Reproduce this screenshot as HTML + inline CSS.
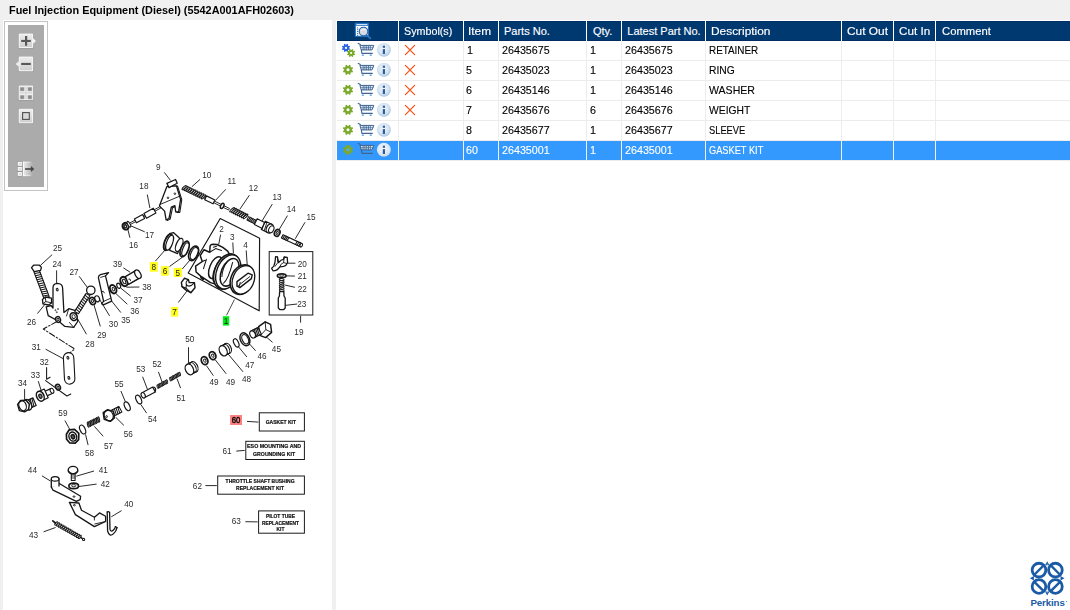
<!DOCTYPE html><html><head><meta charset="utf-8"><title>Parts</title><style>
html,body{margin:0;padding:0}
body{width:1070px;height:610px;overflow:hidden;background:#f0f0f0;font-family:"Liberation Sans", sans-serif;font-size:11px;color:#000;position:relative}
.abs{position:absolute}
#title{left:9.2px;top:3px;font-weight:bold;font-size:11px;line-height:14px;white-space:nowrap;transform-origin:0 50%;transform:scaleX(0.9897);color:#000}
#left{left:3px;top:20px;width:329px;height:590px;background:#fff}
#right{left:336px;top:20px;width:734px;height:590px;background:#fff}
#hdr{left:337px;top:21px;width:733px;height:20px;background:#003870;box-shadow:inset 0 -1px 0 #002c62, inset 0 1px 0 #003066}
.hs{position:absolute;top:21px;width:1px;height:20px;background:#fff}
.ht{position:absolute;transform-origin:0 50%;-webkit-text-stroke:0.15px #fff;top:21px;height:20px;line-height:20px;color:#fff;white-space:nowrap;font-size:11px}
.vl{position:absolute;top:41px;width:1px;height:120px;background:#ededed}
.hl{position:absolute;left:337px;width:733px;height:1px;background:#ececec}
.ct{position:absolute;transform-origin:0 50%;-webkit-text-stroke:0.12px currentColor;height:19px;line-height:19px;white-space:nowrap;font-size:11px}
#sel{left:337px;top:141px;width:733px;height:19px;background:#3399ff}
.selsep{position:absolute;top:141px;width:1px;height:19px;background:#f0f0f0}
svg{position:absolute;left:0;top:0;overflow:visible}
svg .lb{filter:grayscale(1)}
</style></head><body>
<div id="title" class="abs">Fuel Injection Equipment (Diesel) (5542A001AFH02603)</div>
<div id="left" class="abs"></div><div id="right" class="abs"></div>
<div id="hdr" class="abs"></div>
<div class="hs" style="left:398px"></div>
<div class="hs" style="left:463px"></div>
<div class="hs" style="left:498px"></div>
<div class="hs" style="left:586px"></div>
<div class="hs" style="left:621px"></div>
<div class="hs" style="left:705px"></div>
<div class="hs" style="left:841px"></div>
<div class="hs" style="left:893px"></div>
<div class="hs" style="left:935px"></div>
<div class="ht" id="h1" style="left:404.3px;transform:scaleX(0.9756)">Symbol(s)</div>
<div class="ht" id="h2" style="left:468.1px;transform:scaleX(1.0765)">Item</div>
<div class="ht" id="h3" style="left:504px;transform:scaleX(1.0000)">Parts No.</div>
<div class="ht" id="h4" style="left:592.9px;transform:scaleX(1.0000)">Qty.</div>
<div class="ht" id="h5" style="left:627.3px;transform:scaleX(1.0000)">Latest Part No.</div>
<div class="ht" id="h6" style="left:711.3px;transform:scaleX(1.0801)">Description</div>
<div class="ht" id="h7" style="left:847.3px;transform:scaleX(1.0827)">Cut Out</div>
<div class="ht" id="h8" style="left:899.4px;transform:scaleX(1.0611)">Cut In</div>
<div class="ht" id="h9" style="left:941.5px;transform:scaleX(1.0230)">Comment</div>
<div class="vl" style="left:398px"></div>
<div class="vl" style="left:463px"></div>
<div class="vl" style="left:498px"></div>
<div class="vl" style="left:586px"></div>
<div class="vl" style="left:621px"></div>
<div class="vl" style="left:705px"></div>
<div class="vl" style="left:841px"></div>
<div class="vl" style="left:893px"></div>
<div class="vl" style="left:935px"></div>
<div class="hl" style="top:60px"></div>
<div class="hl" style="top:80px"></div>
<div class="hl" style="top:100px"></div>
<div class="hl" style="top:120px"></div>
<div class="hl" style="top:140px"></div>
<div class="hl" style="top:160px"></div>
<div id="sel" class="abs"></div>
<div class="selsep" style="left:398px"></div>
<div class="selsep" style="left:463px"></div>
<div class="selsep" style="left:498px"></div>
<div class="selsep" style="left:586px"></div>
<div class="selsep" style="left:621px"></div>
<div class="selsep" style="left:705px"></div>
<div class="selsep" style="left:841px"></div>
<div class="selsep" style="left:893px"></div>
<div class="selsep" style="left:935px"></div>
<div class="ct" id="c2_0" style="left:466.9px;top:41px;color:#000;transform:scaleX(0.9750)">1</div>
<div class="ct" id="c3_0" style="left:501.9px;top:41px;color:#000;transform:scaleX(0.9750)">26435675</div>
<div class="ct" id="c4_0" style="left:589.9px;top:41px;color:#000;transform:scaleX(0.9750)">1</div>
<div class="ct" id="c5_0" style="left:624.9px;top:41px;color:#000;transform:scaleX(0.9750)">26435675</div>
<div class="ct" id="c6_0" style="left:708.8px;top:41px;color:#000;transform:scaleX(0.8983)">RETAINER</div>
<div class="ct" id="c2_1" style="left:466.3px;top:61px;color:#000;transform:scaleX(0.9750)">5</div>
<div class="ct" id="c3_1" style="left:501.9px;top:61px;color:#000;transform:scaleX(0.9750)">26435023</div>
<div class="ct" id="c4_1" style="left:589.9px;top:61px;color:#000;transform:scaleX(0.9750)">1</div>
<div class="ct" id="c5_1" style="left:624.9px;top:61px;color:#000;transform:scaleX(0.9750)">26435023</div>
<div class="ct" id="c6_1" style="left:709.0px;top:61px;color:#000;transform:scaleX(0.9350)">RING</div>
<div class="ct" id="c2_2" style="left:466.3px;top:81px;color:#000;transform:scaleX(0.9750)">6</div>
<div class="ct" id="c3_2" style="left:501.9px;top:81px;color:#000;transform:scaleX(0.9750)">26435146</div>
<div class="ct" id="c4_2" style="left:589.9px;top:81px;color:#000;transform:scaleX(0.9750)">1</div>
<div class="ct" id="c5_2" style="left:624.9px;top:81px;color:#000;transform:scaleX(0.9750)">26435146</div>
<div class="ct" id="c6_2" style="left:709.2px;top:81px;color:#000;transform:scaleX(0.9598)">WASHER</div>
<div class="ct" id="c2_3" style="left:466.3px;top:101px;color:#000;transform:scaleX(0.9750)">7</div>
<div class="ct" id="c3_3" style="left:501.9px;top:101px;color:#000;transform:scaleX(0.9750)">26435676</div>
<div class="ct" id="c4_3" style="left:589.9px;top:101px;color:#000;transform:scaleX(0.9750)">6</div>
<div class="ct" id="c5_3" style="left:624.9px;top:101px;color:#000;transform:scaleX(0.9750)">26435676</div>
<div class="ct" id="c6_3" style="left:709.2px;top:101px;color:#000;transform:scaleX(0.9386)">WEIGHT</div>
<div class="ct" id="c2_4" style="left:466.2px;top:121px;color:#000;transform:scaleX(0.9750)">8</div>
<div class="ct" id="c3_4" style="left:501.9px;top:121px;color:#000;transform:scaleX(0.9750)">26435677</div>
<div class="ct" id="c4_4" style="left:589.9px;top:121px;color:#000;transform:scaleX(0.9750)">1</div>
<div class="ct" id="c5_4" style="left:624.9px;top:121px;color:#000;transform:scaleX(0.9750)">26435677</div>
<div class="ct" id="c6_4" style="left:708.8px;top:121px;color:#000;transform:scaleX(0.8464)">SLEEVE</div>
<div class="ct" id="c2_5" style="left:466.3px;top:141px;color:#fff;transform:scaleX(0.9750)">60</div>
<div class="ct" id="c3_5" style="left:501.9px;top:141px;color:#fff;transform:scaleX(0.9750)">26435001</div>
<div class="ct" id="c4_5" style="left:589.9px;top:141px;color:#fff;transform:scaleX(0.9750)">1</div>
<div class="ct" id="c5_5" style="left:624.9px;top:141px;color:#fff;transform:scaleX(0.9750)">26435001</div>
<div class="ct" id="c6_5" style="left:709.3px;top:141px;color:#fff;transform:scaleX(0.8402)">GASKET KIT</div>
<svg width="1070" height="610" viewBox="0 0 1070 610">
<g><rect x="355.3" y="23.2" width="13.1" height="13.1" fill="#fff" stroke="#1b6dbf" stroke-width="1"/><rect x="355.3" y="23.2" width="13.1" height="2.6" fill="#1b6dbf"/><rect x="356.4" y="24.1" width="11" height="0.8" fill="#fff"/><rect x="357" y="27.5" width="1.2" height="0.9" fill="#1b5ea8"/><rect x="357" y="29.3" width="1.2" height="0.9" fill="#1b5ea8"/><rect x="357" y="31.1" width="1.2" height="0.9" fill="#1b5ea8"/><rect x="357" y="32.9" width="1.2" height="0.9" fill="#1b5ea8"/><rect x="357" y="34.7" width="1.2" height="0.9" fill="#1b5ea8"/><path d="M366,34.6 L370.3,38.2" stroke="#2a72c4" stroke-width="1.8" stroke-linecap="round"/><circle cx="363.5" cy="31.5" r="4.3" fill="#d9dadf" stroke="#1c63b3" stroke-width="1.1"/><path d="M360.9,30.3 Q363.4,28.3 366,30.3" stroke="#fff" stroke-width="0.9" fill="none" opacity="0.9"/></g>
<path d="M349.08,48.28 L350.10,48.81 L349.55,50.14 L348.45,49.79 L347.91,50.34 L348.26,51.44 L346.93,52.00 L346.40,50.97 L345.62,50.98 L345.09,52.00 L343.76,51.45 L344.11,50.35 L343.56,49.81 L342.46,50.16 L341.90,48.83 L342.93,48.30 L342.92,47.52 L341.90,46.99 L342.45,45.66 L343.55,46.01 L344.09,45.46 L343.74,44.36 L345.07,43.80 L345.60,44.83 L346.38,44.82 L346.91,43.80 L348.24,44.35 L347.89,45.45 L348.44,45.99 L349.54,45.64 L350.10,46.97 L349.07,47.50Z" fill="#2b62e6"/><circle cx="346" cy="47.9" r="1.1" fill="#fff"/>
<path d="M354.18,53.38 L355.20,53.91 L354.65,55.24 L353.55,54.89 L353.01,55.44 L353.36,56.54 L352.03,57.10 L351.50,56.07 L350.72,56.08 L350.19,57.10 L348.86,56.55 L349.21,55.45 L348.66,54.91 L347.56,55.26 L347.00,53.93 L348.03,53.40 L348.02,52.62 L347.00,52.09 L347.55,50.76 L348.65,51.11 L349.19,50.56 L348.84,49.46 L350.17,48.90 L350.70,49.93 L351.48,49.92 L352.01,48.90 L353.34,49.45 L352.99,50.55 L353.54,51.09 L354.64,50.74 L355.20,52.07 L354.17,52.60Z" fill="#7aaa2a"/><circle cx="351.1" cy="53" r="1.1" fill="#fff"/>
<g transform="translate(358,43)" fill="none" stroke="#3f6694" stroke-linecap="round" stroke-linejoin="round"><path d="M0.2,0.4 L1.6,0.9 L2.6,2.3" stroke-width="1.1"/><path d="M2.3,2.4 L15.8,2.4 L14.0,6.9 L3.7,6.9 Z" stroke-width="1" fill="#e8eef6"/><path d="M5.1,2.6 L5.1,6.8" stroke-width="0.8"/><path d="M6.9,2.6 L6.9,6.8" stroke-width="0.8"/><path d="M8.7,2.6 L8.7,6.8" stroke-width="0.8"/><path d="M10.5,2.6 L10.5,6.8" stroke-width="0.8"/><path d="M12.3,2.6 L12.3,6.8" stroke-width="0.8"/><path d="M2.9,4.6 L15,4.6" stroke-width="0.6"/><path d="M3.3,6.9 L3.9,10.4 L14.3,10.4" stroke-width="1.1"/><path d="M4.3,12.1 L5.4,12.1 M12.2,12.1 L13.3,12.1" stroke="#4b95e0" stroke-width="1.4"/></g>
<defs><radialGradient id="ig" cx="0.45" cy="0.4" r="0.62"><stop offset="0" stop-color="#eef4fa"/><stop offset="0.6" stop-color="#d7e5f2"/><stop offset="1" stop-color="#a5c4e0"/></radialGradient><radialGradient id="igs" cx="0.45" cy="0.4" r="0.62"><stop offset="0" stop-color="#f2f6fb"/><stop offset="0.7" stop-color="#dde8f3"/><stop offset="1" stop-color="#b9d2ea"/></radialGradient></defs><circle cx="383.9" cy="49.8" r="7" fill="url(#ig)"/><rect x="382.79999999999995" y="45.699999999999996" width="2.2" height="2.1" fill="#2f5c9c"/><rect x="382.79999999999995" y="49.099999999999994" width="2.2" height="4.9" fill="#2f5c9c"/>
<path d="M405.4,45.4 L414.6,54.6 M414.6,45.4 L405.4,54.6" stroke="#ff5218" stroke-width="1.3" stroke-linecap="round" fill="none"/>
<path d="M351.87,70.28 L353.08,70.92 L352.40,72.57 L351.09,72.18 L350.40,72.88 L350.80,74.18 L349.15,74.87 L348.50,73.67 L347.52,73.67 L346.88,74.88 L345.23,74.20 L345.62,72.89 L344.92,72.20 L343.62,72.60 L342.93,70.95 L344.13,70.30 L344.13,69.32 L342.92,68.68 L343.60,67.03 L344.91,67.42 L345.60,66.72 L345.20,65.42 L346.85,64.73 L347.50,65.93 L348.48,65.93 L349.12,64.72 L350.77,65.40 L350.38,66.71 L351.08,67.40 L352.38,67.00 L353.07,68.65 L351.87,69.30Z" fill="#7aaa2a"/><circle cx="348" cy="69.8" r="1.5" fill="#fff"/>
<g transform="translate(358,63)" fill="none" stroke="#3f6694" stroke-linecap="round" stroke-linejoin="round"><path d="M0.2,0.4 L1.6,0.9 L2.6,2.3" stroke-width="1.1"/><path d="M2.3,2.4 L15.8,2.4 L14.0,6.9 L3.7,6.9 Z" stroke-width="1" fill="#e8eef6"/><path d="M5.1,2.6 L5.1,6.8" stroke-width="0.8"/><path d="M6.9,2.6 L6.9,6.8" stroke-width="0.8"/><path d="M8.7,2.6 L8.7,6.8" stroke-width="0.8"/><path d="M10.5,2.6 L10.5,6.8" stroke-width="0.8"/><path d="M12.3,2.6 L12.3,6.8" stroke-width="0.8"/><path d="M2.9,4.6 L15,4.6" stroke-width="0.6"/><path d="M3.3,6.9 L3.9,10.4 L14.3,10.4" stroke-width="1.1"/><path d="M4.3,12.1 L5.4,12.1 M12.2,12.1 L13.3,12.1" stroke="#4b95e0" stroke-width="1.4"/></g>
<circle cx="383.9" cy="69.8" r="7" fill="url(#ig)"/><rect x="382.79999999999995" y="65.7" width="2.2" height="2.1" fill="#2f5c9c"/><rect x="382.79999999999995" y="69.1" width="2.2" height="4.9" fill="#2f5c9c"/>
<path d="M405.4,65.4 L414.6,74.6 M414.6,65.4 L405.4,74.6" stroke="#ff5218" stroke-width="1.3" stroke-linecap="round" fill="none"/>
<path d="M351.87,90.28 L353.08,90.92 L352.40,92.57 L351.09,92.18 L350.40,92.88 L350.80,94.18 L349.15,94.87 L348.50,93.67 L347.52,93.67 L346.88,94.88 L345.23,94.20 L345.62,92.89 L344.92,92.20 L343.62,92.60 L342.93,90.95 L344.13,90.30 L344.13,89.32 L342.92,88.68 L343.60,87.03 L344.91,87.42 L345.60,86.72 L345.20,85.42 L346.85,84.73 L347.50,85.93 L348.48,85.93 L349.12,84.72 L350.77,85.40 L350.38,86.71 L351.08,87.40 L352.38,87.00 L353.07,88.65 L351.87,89.30Z" fill="#7aaa2a"/><circle cx="348" cy="89.8" r="1.5" fill="#fff"/>
<g transform="translate(358,83)" fill="none" stroke="#3f6694" stroke-linecap="round" stroke-linejoin="round"><path d="M0.2,0.4 L1.6,0.9 L2.6,2.3" stroke-width="1.1"/><path d="M2.3,2.4 L15.8,2.4 L14.0,6.9 L3.7,6.9 Z" stroke-width="1" fill="#e8eef6"/><path d="M5.1,2.6 L5.1,6.8" stroke-width="0.8"/><path d="M6.9,2.6 L6.9,6.8" stroke-width="0.8"/><path d="M8.7,2.6 L8.7,6.8" stroke-width="0.8"/><path d="M10.5,2.6 L10.5,6.8" stroke-width="0.8"/><path d="M12.3,2.6 L12.3,6.8" stroke-width="0.8"/><path d="M2.9,4.6 L15,4.6" stroke-width="0.6"/><path d="M3.3,6.9 L3.9,10.4 L14.3,10.4" stroke-width="1.1"/><path d="M4.3,12.1 L5.4,12.1 M12.2,12.1 L13.3,12.1" stroke="#4b95e0" stroke-width="1.4"/></g>
<circle cx="383.9" cy="89.8" r="7" fill="url(#ig)"/><rect x="382.79999999999995" y="85.7" width="2.2" height="2.1" fill="#2f5c9c"/><rect x="382.79999999999995" y="89.1" width="2.2" height="4.9" fill="#2f5c9c"/>
<path d="M405.4,85.4 L414.6,94.6 M414.6,85.4 L405.4,94.6" stroke="#ff5218" stroke-width="1.3" stroke-linecap="round" fill="none"/>
<path d="M351.87,110.28 L353.08,110.92 L352.40,112.57 L351.09,112.18 L350.40,112.88 L350.80,114.18 L349.15,114.87 L348.50,113.67 L347.52,113.67 L346.88,114.88 L345.23,114.20 L345.62,112.89 L344.92,112.20 L343.62,112.60 L342.93,110.95 L344.13,110.30 L344.13,109.32 L342.92,108.68 L343.60,107.03 L344.91,107.42 L345.60,106.72 L345.20,105.42 L346.85,104.73 L347.50,105.93 L348.48,105.93 L349.12,104.72 L350.77,105.40 L350.38,106.71 L351.08,107.40 L352.38,107.00 L353.07,108.65 L351.87,109.30Z" fill="#7aaa2a"/><circle cx="348" cy="109.8" r="1.5" fill="#fff"/>
<g transform="translate(358,103)" fill="none" stroke="#3f6694" stroke-linecap="round" stroke-linejoin="round"><path d="M0.2,0.4 L1.6,0.9 L2.6,2.3" stroke-width="1.1"/><path d="M2.3,2.4 L15.8,2.4 L14.0,6.9 L3.7,6.9 Z" stroke-width="1" fill="#e8eef6"/><path d="M5.1,2.6 L5.1,6.8" stroke-width="0.8"/><path d="M6.9,2.6 L6.9,6.8" stroke-width="0.8"/><path d="M8.7,2.6 L8.7,6.8" stroke-width="0.8"/><path d="M10.5,2.6 L10.5,6.8" stroke-width="0.8"/><path d="M12.3,2.6 L12.3,6.8" stroke-width="0.8"/><path d="M2.9,4.6 L15,4.6" stroke-width="0.6"/><path d="M3.3,6.9 L3.9,10.4 L14.3,10.4" stroke-width="1.1"/><path d="M4.3,12.1 L5.4,12.1 M12.2,12.1 L13.3,12.1" stroke="#4b95e0" stroke-width="1.4"/></g>
<circle cx="383.9" cy="109.8" r="7" fill="url(#ig)"/><rect x="382.79999999999995" y="105.7" width="2.2" height="2.1" fill="#2f5c9c"/><rect x="382.79999999999995" y="109.1" width="2.2" height="4.9" fill="#2f5c9c"/>
<path d="M405.4,105.4 L414.6,114.6 M414.6,105.4 L405.4,114.6" stroke="#ff5218" stroke-width="1.3" stroke-linecap="round" fill="none"/>
<path d="M351.87,130.28 L353.08,130.92 L352.40,132.57 L351.09,132.18 L350.40,132.88 L350.80,134.18 L349.15,134.87 L348.50,133.67 L347.52,133.67 L346.88,134.88 L345.23,134.20 L345.62,132.89 L344.92,132.20 L343.62,132.60 L342.93,130.95 L344.13,130.30 L344.13,129.32 L342.92,128.68 L343.60,127.03 L344.91,127.42 L345.60,126.72 L345.20,125.42 L346.85,124.73 L347.50,125.93 L348.48,125.93 L349.12,124.72 L350.77,125.40 L350.38,126.71 L351.08,127.40 L352.38,127.00 L353.07,128.65 L351.87,129.30Z" fill="#7aaa2a"/><circle cx="348" cy="129.8" r="1.5" fill="#fff"/>
<g transform="translate(358,123)" fill="none" stroke="#3f6694" stroke-linecap="round" stroke-linejoin="round"><path d="M0.2,0.4 L1.6,0.9 L2.6,2.3" stroke-width="1.1"/><path d="M2.3,2.4 L15.8,2.4 L14.0,6.9 L3.7,6.9 Z" stroke-width="1" fill="#e8eef6"/><path d="M5.1,2.6 L5.1,6.8" stroke-width="0.8"/><path d="M6.9,2.6 L6.9,6.8" stroke-width="0.8"/><path d="M8.7,2.6 L8.7,6.8" stroke-width="0.8"/><path d="M10.5,2.6 L10.5,6.8" stroke-width="0.8"/><path d="M12.3,2.6 L12.3,6.8" stroke-width="0.8"/><path d="M2.9,4.6 L15,4.6" stroke-width="0.6"/><path d="M3.3,6.9 L3.9,10.4 L14.3,10.4" stroke-width="1.1"/><path d="M4.3,12.1 L5.4,12.1 M12.2,12.1 L13.3,12.1" stroke="#4b95e0" stroke-width="1.4"/></g>
<circle cx="383.9" cy="129.8" r="7" fill="url(#ig)"/><rect x="382.79999999999995" y="125.70000000000002" width="2.2" height="2.1" fill="#2f5c9c"/><rect x="382.79999999999995" y="129.10000000000002" width="2.2" height="4.9" fill="#2f5c9c"/>
<path d="M351.87,150.28 L353.08,150.92 L352.40,152.57 L351.09,152.18 L350.40,152.88 L350.80,154.18 L349.15,154.87 L348.50,153.67 L347.52,153.67 L346.88,154.88 L345.23,154.20 L345.62,152.89 L344.92,152.20 L343.62,152.60 L342.93,150.95 L344.13,150.30 L344.13,149.32 L342.92,148.68 L343.60,147.03 L344.91,147.42 L345.60,146.72 L345.20,145.42 L346.85,144.73 L347.50,145.93 L348.48,145.93 L349.12,144.72 L350.77,145.40 L350.38,146.71 L351.08,147.40 L352.38,147.00 L353.07,148.65 L351.87,149.30Z" fill="#7aaa2a"/><circle cx="348" cy="149.8" r="1.5" fill="#5aa7f5"/>
<g transform="translate(358,143)" fill="none" stroke="#41648c" stroke-linecap="round" stroke-linejoin="round"><path d="M0.2,0.4 L1.6,0.9 L2.6,2.3" stroke-width="1.1"/><path d="M2.3,2.4 L15.8,2.4 L14.0,6.9 L3.7,6.9 Z" stroke-width="1" fill="#cfe0f3"/><path d="M5.1,2.6 L5.1,6.8" stroke-width="0.8"/><path d="M6.9,2.6 L6.9,6.8" stroke-width="0.8"/><path d="M8.7,2.6 L8.7,6.8" stroke-width="0.8"/><path d="M10.5,2.6 L10.5,6.8" stroke-width="0.8"/><path d="M12.3,2.6 L12.3,6.8" stroke-width="0.8"/><path d="M2.9,4.6 L15,4.6" stroke-width="0.6"/><path d="M3.3,6.9 L3.9,10.4 L14.3,10.4" stroke-width="1.1"/><path d="M4.3,12.1 L5.4,12.1 M12.2,12.1 L13.3,12.1" stroke="#4b95e0" stroke-width="1.4"/></g>
<circle cx="383.9" cy="149.8" r="7" fill="url(#igs)"/><rect x="382.79999999999995" y="145.70000000000002" width="2.2" height="2.1" fill="#2f5c9c"/><rect x="382.79999999999995" y="149.10000000000002" width="2.2" height="4.9" fill="#2f5c9c"/>
<defs><linearGradient id="bg" x1="0" y1="0" x2="0" y2="1"><stop offset="0" stop-color="#ececec"/><stop offset="0.5" stop-color="#dedede"/><stop offset="1" stop-color="#cfcfcf"/></linearGradient></defs><rect x="4.5" y="21.5" width="43" height="169" fill="#fff" stroke="#c4c4c4" stroke-width="1"/><rect x="8" y="25" width="36" height="162" fill="#ababab"/><rect x="18.3" y="33.2" width="15.200000000000001" height="15.6" rx="1.4" fill="#8e8e8e" opacity="0.55"/><rect x="18.7" y="33.5" width="14.4" height="14.6" rx="1" fill="#f6f6f6"/><rect x="19.7" y="34.5" width="12.4" height="12.6" fill="url(#bg)"/><path d="M33,38.3 L36,41 L33,43.7Z" fill="#f4f4f4"/><rect x="21.2" y="39.9" width="9.6" height="2.1" fill="#585858"/><rect x="25" y="36" width="2.2" height="9.7" fill="#585858"/><rect x="18.3" y="56.300000000000004" width="15.200000000000001" height="15.6" rx="1.4" fill="#8e8e8e" opacity="0.55"/><rect x="18.7" y="56.6" width="14.4" height="14.6" rx="1" fill="#f6f6f6"/><rect x="19.7" y="57.6" width="12.4" height="12.6" fill="url(#bg)"/><path d="M18.8,61.3 L15.8,64 L18.8,66.7Z" fill="#f4f4f4"/><rect x="21.2" y="62.9" width="9.6" height="2.1" fill="#585858"/><rect x="18.3" y="85.2" width="15.200000000000001" height="15.6" rx="1.4" fill="#8e8e8e" opacity="0.55"/><rect x="18.7" y="85.5" width="14.4" height="14.6" rx="1" fill="#f6f6f6"/><rect x="19.7" y="86.5" width="12.4" height="12.6" fill="url(#bg)"/><rect x="19.5" y="86.4" width="12.8" height="12.8" fill="#f4f4f4"/><rect x="25.1" y="86.4" width="1.7" height="12.8" fill="#dadada"/><rect x="19.5" y="92" width="12.8" height="1.7" fill="#dadada"/><rect x="20.1" y="87.2" width="4" height="3.8" fill="#8a8a8a" stroke="#b8b8b8" stroke-width="0.6"/><rect x="20.1" y="95.2" width="4" height="3.8" fill="#8a8a8a" stroke="#b8b8b8" stroke-width="0.6"/><rect x="27.9" y="87.2" width="4" height="3.8" fill="#8a8a8a" stroke="#b8b8b8" stroke-width="0.6"/><rect x="27.9" y="95.2" width="4" height="3.8" fill="#8a8a8a" stroke="#b8b8b8" stroke-width="0.6"/><rect x="18.3" y="108.4" width="15.200000000000001" height="15.6" rx="1.4" fill="#8e8e8e" opacity="0.55"/><rect x="18.7" y="108.7" width="14.4" height="14.6" rx="1" fill="#f6f6f6"/><rect x="19.7" y="109.7" width="12.4" height="12.6" fill="url(#bg)"/><rect x="22.6" y="112.6" width="6.7" height="6.8" fill="#d9d9d9" stroke="#505050" stroke-width="1.1"/><defs><linearGradient id="lg" x1="0" y1="0" x2="1" y2="0"><stop offset="0" stop-color="#ededed"/><stop offset="0.45" stop-color="#cfcfcf"/><stop offset="1" stop-color="#ababab"/></linearGradient><linearGradient id="lw" x1="0" y1="0" x2="1" y2="0"><stop offset="0" stop-color="#fff"/><stop offset="0.7" stop-color="#e6e6e6"/><stop offset="1" stop-color="#ababab"/></linearGradient></defs><rect x="17.2" y="161.4" width="5.2" height="15" fill="#8a8a8a" opacity="0.75"/><rect x="23" y="161.9" width="10" height="14" fill="url(#lg)"/><rect x="23" y="161.7" width="9" height="0.9" fill="url(#lw)"/><rect x="23" y="175.2" width="9" height="0.9" fill="url(#lw)"/><rect x="22.9" y="161.7" width="1.1" height="14.4" fill="#fbfbfb"/><rect x="17.7" y="161.9" width="4.2" height="3.9" fill="#fafafa"/><rect x="18.8" y="162.9" width="2.1" height="1.9" fill="#dcdcdc"/><rect x="17.7" y="166.9" width="4.2" height="3.9" fill="#fafafa"/><rect x="18.8" y="167.9" width="2.1" height="1.9" fill="#dcdcdc"/><rect x="17.7" y="172.0" width="4.2" height="3.9" fill="#fafafa"/><rect x="18.8" y="173.0" width="2.1" height="1.9" fill="#dcdcdc"/><rect x="25.1" y="168.2" width="6.6" height="1.6" fill="#444"/><path d="M30.9,165.9 L34.2,169 L30.9,172.1Z" fill="#444"/>
<g font-family="Liberation Sans, sans-serif"><path d="M164.3,172.4 L170.5,180.4" stroke="#202020" stroke-width="0.95" fill="none"/><text class="lb" x="158.4" y="169.5" text-anchor="middle" font-size="8.2" font-weight="normal" fill="#2b2b2b">9</text><path d="M147.3,194.6 L149.9,208.1" stroke="#202020" stroke-width="0.95" fill="none"/><text class="lb" x="143.9" y="189.0" text-anchor="middle" font-size="8.2" font-weight="normal" fill="#2b2b2b">18</text><path d="M144.7,231.8 L130.7,225.8" stroke="#202020" stroke-width="0.95" fill="none"/><text class="lb" x="149.6" y="238.1" text-anchor="middle" font-size="8.2" font-weight="normal" fill="#2b2b2b">17</text><path d="M129.9,237.7 L127.7,228.8" stroke="#202020" stroke-width="0.95" fill="none"/><text class="lb" x="133.6" y="247.6" text-anchor="middle" font-size="8.2" font-weight="normal" fill="#2b2b2b">16</text><path d="M128.9,225.3 L160.9,208.0 L160.1,206.6 L128.1,223.9Z" stroke="#161616" stroke-width="0.91" fill="#fff" stroke-linejoin="round" stroke-linecap="round" /><path d="M136.4,222.8 L144.6,218.4 L142.6,214.6 L134.4,219.0Z" stroke="#161616" stroke-width="1.17" fill="#fff" stroke-linejoin="round" stroke-linecap="round" /><path d="M146.5,218.2 L155.9,213.0 L153.3,208.2 L143.9,213.4Z" stroke="#161616" stroke-width="1.17" fill="#fff" stroke-linejoin="round" stroke-linecap="round" /><ellipse cx="125.6" cy="226.2" rx="3.0" ry="3.5" transform="rotate(-25 125.6 226.2)" stroke="#161616" stroke-width="1.95" fill="#fff"/><ellipse cx="125.3" cy="226.3" rx="1.2" ry="1.6" transform="rotate(-25 125.3 226.3)" stroke="#161616" stroke-width="1.30" fill="#fff"/><ellipse cx="128.9" cy="224.3" rx="1.2" ry="3.2" transform="rotate(-28 128.9 224.3)" stroke="#161616" stroke-width="1.04" fill="#fff"/><path d="M168.0,187.0 L177.6,186.1 L181.8,199.6 L179.8,212.4 L176.9,212.4 L176.1,206.2 L172.5,207.8 L170.2,219.1 L167.3,220.5 L165.8,211.7 L160.6,206.5Z" stroke="#161616" stroke-width="1.04" fill="#fff" stroke-linejoin="round" stroke-linecap="round" /><path d="M166.8,186.7 L176.4,185.8 L180.6,199.3 L178.6,211.8 L175.7,211.8 L174.9,205.6 L171.3,207.2 L169.0,218.5 L166.1,219.9 L164.6,211.1 L159.4,205.9Z" stroke="#161616" stroke-width="1.30" fill="#fff" stroke-linejoin="round" stroke-linecap="round" /><path d="M166.9,183.4 L175.6,179.5 L177.2,183.2 L169.0,187.6Z" stroke="#161616" stroke-width="1.30" fill="#fff" stroke-linejoin="round" stroke-linecap="round" /><path d="M160.2,204.4 L179.4,196.3" stroke="#161616" stroke-width="0.91" fill="none" stroke-linejoin="round" stroke-linecap="round" /><ellipse cx="168.0" cy="197.8" rx="0.8" ry="0.8" transform="rotate(0 168.0 197.8)" stroke="#161616" stroke-width="0.91" fill="#fff"/><ellipse cx="174.9" cy="193.7" rx="0.8" ry="0.8" transform="rotate(0 174.9 193.7)" stroke="#161616" stroke-width="0.91" fill="#fff"/><path d="M200.0,179.4 L191.9,186.7" stroke="#202020" stroke-width="0.95" fill="none"/><text class="lb" x="206.7" y="178.1" text-anchor="middle" font-size="8.2" font-weight="normal" fill="#2b2b2b">10</text><path d="M225.8,189.3 L215.5,200.4" stroke="#202020" stroke-width="0.95" fill="none"/><text class="lb" x="231.7" y="183.5" text-anchor="middle" font-size="8.2" font-weight="normal" fill="#2b2b2b">11</text><path d="M249.4,195.2 L239.8,209.3" stroke="#202020" stroke-width="0.95" fill="none"/><text class="lb" x="253.4" y="190.9" text-anchor="middle" font-size="8.2" font-weight="normal" fill="#2b2b2b">12</text><path d="M272.3,204.1 L262.0,221.0" stroke="#202020" stroke-width="0.95" fill="none"/><text class="lb" x="277.0" y="200.2" text-anchor="middle" font-size="8.2" font-weight="normal" fill="#2b2b2b">13</text><path d="M287.5,215.6 L278.9,229.9" stroke="#202020" stroke-width="0.95" fill="none"/><text class="lb" x="291.2" y="212.3" text-anchor="middle" font-size="8.2" font-weight="normal" fill="#2b2b2b">14</text><path d="M305.0,222.3 L295.2,238.8" stroke="#202020" stroke-width="0.95" fill="none"/><text class="lb" x="311.0" y="220.0" text-anchor="middle" font-size="8.2" font-weight="normal" fill="#2b2b2b">15</text><ellipse cx="184.2" cy="187.6" rx="0.91" ry="2.80" transform="rotate(45.5 184.2 187.6)" stroke="#161616" stroke-width="1.1" fill="#fff"/><ellipse cx="186.1" cy="188.5" rx="0.91" ry="2.80" transform="rotate(45.5 186.1 188.5)" stroke="#161616" stroke-width="1.1" fill="#fff"/><ellipse cx="188.1" cy="189.4" rx="0.91" ry="2.80" transform="rotate(45.5 188.1 189.4)" stroke="#161616" stroke-width="1.1" fill="#fff"/><ellipse cx="190.0" cy="190.3" rx="0.91" ry="2.80" transform="rotate(45.5 190.0 190.3)" stroke="#161616" stroke-width="1.1" fill="#fff"/><ellipse cx="192.0" cy="191.3" rx="0.91" ry="2.80" transform="rotate(45.5 192.0 191.3)" stroke="#161616" stroke-width="1.1" fill="#fff"/><ellipse cx="193.9" cy="192.2" rx="0.91" ry="2.80" transform="rotate(45.5 193.9 192.2)" stroke="#161616" stroke-width="1.1" fill="#fff"/><ellipse cx="195.8" cy="193.1" rx="0.91" ry="2.80" transform="rotate(45.5 195.8 193.1)" stroke="#161616" stroke-width="1.1" fill="#fff"/><ellipse cx="197.8" cy="194.1" rx="0.91" ry="2.80" transform="rotate(45.5 197.8 194.1)" stroke="#161616" stroke-width="1.1" fill="#fff"/><ellipse cx="199.7" cy="195.0" rx="0.91" ry="2.80" transform="rotate(45.5 199.7 195.0)" stroke="#161616" stroke-width="1.1" fill="#fff"/><ellipse cx="201.7" cy="195.9" rx="0.91" ry="2.80" transform="rotate(45.5 201.7 195.9)" stroke="#161616" stroke-width="1.1" fill="#fff"/><ellipse cx="203.6" cy="196.8" rx="0.91" ry="2.80" transform="rotate(45.5 203.6 196.8)" stroke="#161616" stroke-width="1.1" fill="#fff"/><path d="M204.2,198.1 L228.6,210.0 L229.4,208.4 L205.0,196.5Z" stroke="#161616" stroke-width="0.91" fill="#fff" stroke-linejoin="round" stroke-linecap="round" /><path d="M204.7,199.7 L213.1,203.8 L214.9,200.0 L206.5,195.9Z" stroke="#161616" stroke-width="1.17" fill="#fff" stroke-linejoin="round" stroke-linecap="round" /><ellipse cx="222.2" cy="205.9" rx="1.5" ry="2.8" transform="rotate(27 222.2 205.9)" stroke="#161616" stroke-width="1.43" fill="#fff"/><ellipse cx="232.1" cy="209.7" rx="0.89" ry="3.10" transform="rotate(46.9 232.1 209.7)" stroke="#161616" stroke-width="1.1" fill="#fff"/><ellipse cx="234.0" cy="210.6" rx="0.89" ry="3.10" transform="rotate(46.9 234.0 210.6)" stroke="#161616" stroke-width="1.1" fill="#fff"/><ellipse cx="235.9" cy="211.6" rx="0.89" ry="3.10" transform="rotate(46.9 235.9 211.6)" stroke="#161616" stroke-width="1.1" fill="#fff"/><ellipse cx="237.8" cy="212.6" rx="0.89" ry="3.10" transform="rotate(46.9 237.8 212.6)" stroke="#161616" stroke-width="1.1" fill="#fff"/><ellipse cx="239.8" cy="213.5" rx="0.89" ry="3.10" transform="rotate(46.9 239.8 213.5)" stroke="#161616" stroke-width="1.1" fill="#fff"/><ellipse cx="241.7" cy="214.5" rx="0.89" ry="3.10" transform="rotate(46.9 241.7 214.5)" stroke="#161616" stroke-width="1.1" fill="#fff"/><ellipse cx="243.6" cy="215.5" rx="0.89" ry="3.10" transform="rotate(46.9 243.6 215.5)" stroke="#161616" stroke-width="1.1" fill="#fff"/><ellipse cx="245.5" cy="216.4" rx="0.89" ry="3.10" transform="rotate(46.9 245.5 216.4)" stroke="#161616" stroke-width="1.1" fill="#fff"/><path d="M247.0,220.0 L255.4,224.1 L257.0,220.7 L248.6,216.6Z" stroke="#161616" stroke-width="1.04" fill="#fff" stroke-linejoin="round" stroke-linecap="round" /><path d="M248.1,220.6 L250.3,217.4 M249.5,221.2 L251.7,218.1 M250.9,221.9 L253.1,218.8 M252.3,222.6 L254.5,219.5 M253.7,223.3 L255.9,220.1" stroke="#161616" stroke-width="1.04" fill="none" stroke-linejoin="round" stroke-linecap="round" /><path d="M254.4,224.5 L262.8,228.7 L265.6,222.9 L257.2,218.7Z" stroke="#161616" stroke-width="1.17" fill="#fff" stroke-linejoin="round" stroke-linecap="round" /><path d="M261.3,229.4 L267.5,232.5 L271.7,224.3 L265.5,221.2Z" stroke="#161616" stroke-width="1.17" fill="#fff" stroke-linejoin="round" stroke-linecap="round" /><path d="M264.6,221.9 L262.0,229.6 M266.8,222.9 L264.2,230.7" stroke="#161616" stroke-width="0.91" fill="none" stroke-linejoin="round" stroke-linecap="round" /><ellipse cx="269.8" cy="228.5" rx="3.4" ry="4.7" transform="rotate(27 269.8 228.5)" stroke="#161616" stroke-width="1.30" fill="#fff"/><ellipse cx="271.3" cy="229.3" rx="2.4" ry="3.6" transform="rotate(27 271.3 229.3)" stroke="#161616" stroke-width="1.04" fill="#fff"/><ellipse cx="277.2" cy="232.9" rx="2.6" ry="3.6" transform="rotate(27 277.2 232.9)" stroke="#161616" stroke-width="1.62" fill="#fff"/><ellipse cx="277.2" cy="232.9" rx="0.9" ry="1.7" transform="rotate(27 277.2 232.9)" stroke="#161616" stroke-width="0.91" fill="#fff"/><path d="M281.4,238.0 L300.4,246.8 L302.0,243.6 L283.0,234.8Z" stroke="#161616" stroke-width="1.17" fill="#fff" stroke-linejoin="round" stroke-linecap="round" /><path d="M282.6,238.6 L284.6,235.5 M284.1,239.2 L286.1,236.2 M285.5,239.9 L287.5,236.9 M287.0,240.6 L289.0,237.5" stroke="#161616" stroke-width="1.04" fill="none" stroke-linejoin="round" stroke-linecap="round" /><path d="M295.3,244.5 L297.2,241.4 M296.9,245.2 L298.9,242.2 M298.6,246.0 L300.5,242.9" stroke="#161616" stroke-width="1.04" fill="none" stroke-linejoin="round" stroke-linecap="round" /><ellipse cx="301.2" cy="245.2" rx="1.2" ry="1.8" transform="rotate(27 301.2 245.2)" stroke="#161616" stroke-width="1.04" fill="#fff"/><path d="M220.2,218.5 L259.6,238.2 L259.2,310.8 L188.2,273 Z" stroke="#161616" stroke-width="1.17" fill="none" stroke-linejoin="round" stroke-linecap="round" /><path d="M234.4,299.6 L226.5,315.3" stroke="#202020" stroke-width="0.8" fill="none"/><path d="M220.6,234.7 L218.7,244.5" stroke="#202020" stroke-width="0.95" fill="none"/><text class="lb" x="221.6" y="232.2" text-anchor="middle" font-size="8.2" font-weight="normal" fill="#2b2b2b">2</text><path d="M232.8,242.5 L233.4,253.3" stroke="#202020" stroke-width="0.95" fill="none"/><text class="lb" x="232.4" y="240.0" text-anchor="middle" font-size="8.2" font-weight="normal" fill="#2b2b2b">3</text><path d="M246.2,250.4 L247.2,265.1" stroke="#202020" stroke-width="0.95" fill="none"/><text class="lb" x="245.6" y="247.9" text-anchor="middle" font-size="8.2" font-weight="normal" fill="#2b2b2b">4</text><path d="M195.6,266.2 L202.3,261.5 L200.2,255.6 L203.9,249.8 L209.7,252.3 L210.1,246.1 Q210.8,244.2 213,244.2 L217,244.5 L222.8,247.4 L227.7,251.1 L230.5,256 L230,275 L222,284.5 L214.6,283.9 L210.5,282.6 L205.6,279.3 L200.7,276.1 L196.1,272 Z" stroke="#161616" stroke-width="1.49" fill="#fff" stroke-linejoin="round" stroke-linecap="round" /><path d="M206.4,259.3 L203.5,268.7 M209.7,252.3 L215.6,248.6 L221.5,250.4 M213.4,247.2 L216.6,246.2 M202.3,261.5 L205.2,260.3" stroke="#161616" stroke-width="1.04" fill="none" stroke-linejoin="round" stroke-linecap="round" /><path d="M200.9,276.6 L203.6,278.6 L203.2,279.8 L200.6,277.8 Z" stroke="#161616" stroke-width="1.04" fill="#333" stroke-linejoin="round" stroke-linecap="round" /><ellipse cx="215.4" cy="267.6" rx="5.6" ry="11.6" transform="rotate(23 215.4 267.6)" stroke="#161616" stroke-width="1.43" fill="none"/><ellipse cx="220.5" cy="270.5" rx="6.0" ry="13.6" transform="rotate(23 220.5 270.5)" stroke="#161616" stroke-width="1.30" fill="#fff"/><ellipse cx="226.6" cy="271.5" rx="11.8" ry="18.4" transform="rotate(23 226.6 271.5)" stroke="#161616" stroke-width="1.56" fill="#fff"/><ellipse cx="228.2" cy="271.9" rx="11.4" ry="17.9" transform="rotate(23 228.2 271.9)" stroke="#161616" stroke-width="1.43" fill="#fff"/><ellipse cx="229.6" cy="272.3" rx="8.2" ry="14.6" transform="rotate(23 229.6 272.3)" stroke="#161616" stroke-width="1.56" fill="#fff"/><path d="M223.6,283.2 Q228.5,279 232.6,262.4 M221.9,276.6 Q222.3,268.6 227.0,262.0" stroke="#161616" stroke-width="1.04" fill="none" stroke-linejoin="round" stroke-linecap="round" /><ellipse cx="242.1" cy="279.6" rx="11.2" ry="15.4" transform="rotate(23 242.1 279.6)" stroke="#161616" stroke-width="1.56" fill="#fff"/><ellipse cx="243.4" cy="279.8" rx="10.6" ry="14.8" transform="rotate(23 243.4 279.8)" stroke="#161616" stroke-width="1.30" fill="#fff"/><path d="M237.0,281.6 L248.0,273.2 L252.2,274.8 L251.4,278.6 L239.8,287.6 L237.0,286.2Z" stroke="#161616" stroke-width="1.43" fill="#fff" stroke-linejoin="round" stroke-linecap="round" /><path d="M238.6,285.4 L249.8,276.6 M239.2,286.6 L240.2,282.4" stroke="#161616" stroke-width="0.91" fill="none" stroke-linejoin="round" stroke-linecap="round" /><path d="M155.3,261.2 L165.6,249.4" stroke="#202020" stroke-width="0.95" fill="none"/><path d="M169.5,266.5 L182.3,257.3" stroke="#202020" stroke-width="0.95" fill="none"/><path d="M182.3,269.0 L190.7,259.2" stroke="#202020" stroke-width="0.95" fill="none"/><path d="M178.3,302.5 L187.2,290.7" stroke="#202020" stroke-width="0.95" fill="none"/><rect x="149.8" y="262.1" width="8.0" height="9.6" fill="#ffff1a"/><text class="lb" x="153.8" y="270.1" text-anchor="middle" font-size="8.2" font-weight="normal" fill="#1a1a1a">8</text><rect x="161.1" y="266.1" width="7.8" height="9.6" fill="#ffff1a"/><text class="lb" x="165.0" y="274.1" text-anchor="middle" font-size="8.2" font-weight="normal" fill="#1a1a1a">6</text><rect x="173.8" y="267.9" width="8.0" height="9.1" fill="#ffff1a"/><text class="lb" x="177.8" y="275.6" text-anchor="middle" font-size="8.2" font-weight="normal" fill="#1a1a1a">5</text><rect x="171.1" y="306.9" width="7.0" height="9.7" fill="#ffff1a"/><text class="lb" x="174.6" y="314.9" text-anchor="middle" font-size="8.2" font-weight="normal" fill="#1a1a1a">7</text><rect x="222.9" y="316.2" width="6.3" height="9.4" fill="#00ee1c"/><text class="lb" x="226.1" y="324.1" text-anchor="middle" font-size="8.2" font-weight="normal" fill="#1a1a1a">1</text><path d="M169.6,233.6 L173.4,232.6 L178.6,237.2 L182.0,242.0 L177.6,253.6 L169.8,250.4Z" stroke="#161616" stroke-width="1.30" fill="#fff" stroke-linejoin="round" stroke-linecap="round" /><ellipse cx="168.0" cy="242.2" rx="3.4" ry="8.5" transform="rotate(20 168.0 242.2)" stroke="#161616" stroke-width="1.95" fill="#fff"/><ellipse cx="169.6" cy="242.7" rx="3.0" ry="7.9" transform="rotate(20 169.6 242.7)" stroke="#161616" stroke-width="1.17" fill="#fff"/><ellipse cx="179.2" cy="244.9" rx="3.0" ry="7.0" transform="rotate(22 179.2 244.9)" stroke="#161616" stroke-width="1.30" fill="#fff"/><ellipse cx="184.6" cy="249.0" rx="3.7" ry="8.3" transform="rotate(22 184.6 249.0)" stroke="#161616" stroke-width="1.69" fill="#fff"/><ellipse cx="185.4" cy="249.3" rx="2.6" ry="6.9" transform="rotate(22 185.4 249.3)" stroke="#161616" stroke-width="1.17" fill="#fff"/><ellipse cx="193.6" cy="253.3" rx="4.3" ry="7.7" transform="rotate(24 193.6 253.3)" stroke="#161616" stroke-width="1.69" fill="#fff"/><ellipse cx="194.2" cy="253.5" rx="3.2" ry="6.4" transform="rotate(24 194.2 253.5)" stroke="#161616" stroke-width="1.17" fill="#fff"/><path d="M181.4,282.4 L184.4,278.3 L188.4,279.6 L189.2,282.6 L194.4,282.6 L195.0,287.7 L190.8,292.7 L186.4,290.4 L182.0,286.6Z" stroke="#161616" stroke-width="1.43" fill="#fff" stroke-linejoin="round" stroke-linecap="round" /><path d="M188.4,279.6 Q185.2,281.6 186.4,284.6 Q188.0,287.0 191.2,285.6 L194.4,282.6 M182.0,286.6 L186.0,288.2 L190.8,292.7 M186.0,288.2 L186.4,284.6" stroke="#161616" stroke-width="1.04" fill="none" stroke-linejoin="round" stroke-linecap="round" /><rect x="269.2" y="251.6" width="43.6" height="63.4" fill="#fff" stroke="#1a1a1a" stroke-width="1"/><path d="M300.6,315.7 L300.6,322.6" stroke="#202020" stroke-width="0.95" fill="none"/><text class="lb" x="298.9" y="335.1" text-anchor="middle" font-size="8.2" font-weight="normal" fill="#2b2b2b">19</text><path d="M287.7,263.2 L295.4,263.2" stroke="#202020" stroke-width="0.95" fill="none"/><text class="lb" x="302.3" y="267.1" text-anchor="middle" font-size="8.2" font-weight="normal" fill="#2b2b2b">20</text><path d="M285.1,275.8 L294.9,276.1" stroke="#202020" stroke-width="0.95" fill="none"/><text class="lb" x="302.3" y="279.1" text-anchor="middle" font-size="8.2" font-weight="normal" fill="#2b2b2b">21</text><path d="M285.1,285.1 L294.9,287.3" stroke="#202020" stroke-width="0.95" fill="none"/><text class="lb" x="302.3" y="292.1" text-anchor="middle" font-size="8.2" font-weight="normal" fill="#2b2b2b">22</text><path d="M285.1,305.4 L297.2,304.0" stroke="#202020" stroke-width="0.95" fill="none"/><text class="lb" x="301.8" y="307.0" text-anchor="middle" font-size="8.2" font-weight="normal" fill="#2b2b2b">23</text><path d="M275.6,256.6 L277.4,256.8 L278.6,262.5 Q281,259.5 283.5,259.3 L284.2,257 L287.2,257.3 L287.6,262.8 Q286.5,265.6 283.6,266.4 L279.8,266.8 Q277.5,270.6 273,270.8 L271.6,268.2 Q274.5,266.5 275,262 Z" stroke="#161616" stroke-width="1.30" fill="#fff" stroke-linejoin="round" stroke-linecap="round" /><path d="M277.4,256.8 L277.8,262.6 L275,266.4 M279.8,266.8 Q280.6,263.4 283.6,262.6 L284.2,257 M283.6,262.6 L286.6,263.4" stroke="#161616" stroke-width="0.91" fill="none" stroke-linejoin="round" stroke-linecap="round" /><ellipse cx="281.7" cy="275.8" rx="4.4" ry="1.9" transform="rotate(0 281.7 275.8)" stroke="#161616" stroke-width="1.56" fill="#fff"/><ellipse cx="281.7" cy="275.6" rx="2.0" ry="0.8" transform="rotate(0 281.7 275.6)" stroke="#161616" stroke-width="0.78" fill="#fff"/><ellipse cx="281.7" cy="279.5" rx="0.91" ry="2.50" transform="rotate(102.0 281.7 279.5)" stroke="#161616" stroke-width="1.0" fill="#fff"/><ellipse cx="281.7" cy="281.6" rx="0.91" ry="2.50" transform="rotate(102.0 281.7 281.6)" stroke="#161616" stroke-width="1.0" fill="#fff"/><ellipse cx="281.7" cy="283.8" rx="0.91" ry="2.50" transform="rotate(102.0 281.7 283.8)" stroke="#161616" stroke-width="1.0" fill="#fff"/><ellipse cx="281.7" cy="286.0" rx="0.91" ry="2.50" transform="rotate(102.0 281.7 286.0)" stroke="#161616" stroke-width="1.0" fill="#fff"/><ellipse cx="281.7" cy="288.1" rx="0.91" ry="2.50" transform="rotate(102.0 281.7 288.1)" stroke="#161616" stroke-width="1.0" fill="#fff"/><ellipse cx="281.7" cy="290.3" rx="0.91" ry="2.50" transform="rotate(102.0 281.7 290.3)" stroke="#161616" stroke-width="1.0" fill="#fff"/><path d="M279.6,291.6 L283.8,291.6 L284.0,296.0 L285.2,298.0 L285.2,308.0 L283.5,309.7 L280.0,309.7 L278.3,308.0 L278.3,298.0 L279.4,296.0Z" stroke="#161616" stroke-width="1.30" fill="#fff" stroke-linejoin="round" stroke-linecap="round" /><path d="M52.1,254.7 L40.3,265.5" stroke="#202020" stroke-width="0.95" fill="none"/><text class="lb" x="57.6" y="251.4" text-anchor="middle" font-size="8.2" font-weight="normal" fill="#2b2b2b">25</text><path d="M56.6,270.4 L56.6,283.2" stroke="#202020" stroke-width="0.95" fill="none"/><text class="lb" x="57.0" y="266.7" text-anchor="middle" font-size="8.2" font-weight="normal" fill="#2b2b2b">24</text><path d="M79.2,276.3 L87.5,287.7" stroke="#202020" stroke-width="0.95" fill="none"/><text class="lb" x="74.1" y="275.4" text-anchor="middle" font-size="8.2" font-weight="normal" fill="#2b2b2b">27</text><path d="M37.4,313.6 L46.2,302.8" stroke="#202020" stroke-width="0.95" fill="none"/><text class="lb" x="31.5" y="324.9" text-anchor="middle" font-size="8.2" font-weight="normal" fill="#2b2b2b">26</text><path d="M86.5,334.3 L75.7,315.6" stroke="#202020" stroke-width="0.95" fill="none"/><text class="lb" x="89.9" y="346.5" text-anchor="middle" font-size="8.2" font-weight="normal" fill="#2b2b2b">28</text><path d="M100.3,326.4 L93.4,302.8" stroke="#202020" stroke-width="0.95" fill="none"/><text class="lb" x="101.7" y="337.9" text-anchor="middle" font-size="8.2" font-weight="normal" fill="#2b2b2b">29</text><path d="M109.6,315.9 L99.6,299.5" stroke="#202020" stroke-width="0.95" fill="none"/><text class="lb" x="113.4" y="326.5" text-anchor="middle" font-size="8.2" font-weight="normal" fill="#2b2b2b">30</text><path d="M120.9,312.6 L111.7,301.1" stroke="#202020" stroke-width="0.95" fill="none"/><text class="lb" x="125.8" y="322.6" text-anchor="middle" font-size="8.2" font-weight="normal" fill="#2b2b2b">35</text><path d="M127.3,304.2 L116.0,293.7" stroke="#202020" stroke-width="0.95" fill="none"/><text class="lb" x="134.7" y="313.9" text-anchor="middle" font-size="8.2" font-weight="normal" fill="#2b2b2b">36</text><path d="M130.7,296.2 L120.9,288.2" stroke="#202020" stroke-width="0.95" fill="none"/><text class="lb" x="138.0" y="303.2" text-anchor="middle" font-size="8.2" font-weight="normal" fill="#2b2b2b">37</text><path d="M139.4,287.0 L126.4,287.2" stroke="#202020" stroke-width="0.95" fill="none"/><text class="lb" x="146.8" y="289.8" text-anchor="middle" font-size="8.2" font-weight="normal" fill="#2b2b2b">38</text><path d="M123.4,267.9 L130.1,272.2" stroke="#202020" stroke-width="0.95" fill="none"/><text class="lb" x="117.5" y="267.3" text-anchor="middle" font-size="8.2" font-weight="normal" fill="#2b2b2b">39</text><path d="M34.0,272.0 L44.0,298.6 L49.2,296.6 L39.2,270.0Z" stroke="#161616" stroke-width="1.04" fill="#fff" stroke-linejoin="round" stroke-linecap="round" /><path d="M34.6,273.6 L40.1,272.5 M35.4,275.7 L40.9,274.5 M36.1,277.7 L41.7,276.5 M36.9,279.8 L42.4,278.6 M37.7,281.8 L43.2,280.6 M38.4,283.9 L44.0,282.7 M39.2,285.9 L44.8,284.7 M40.0,288.0 L45.5,286.8 M40.8,290.0 L46.3,288.8 M41.5,292.1 L47.1,290.9 M42.3,294.1 L47.8,292.9 M43.1,296.1 L48.6,295.0" stroke="#161616" stroke-width="1.04" fill="none" stroke-linejoin="round" stroke-linecap="round" /><path d="M31.5,267.6 L33.6,265.2 L39.4,265.2 L41.4,267.4 L40.6,270.4 L34.2,271.6Z" stroke="#161616" stroke-width="1.30" fill="#fff" stroke-linejoin="round" stroke-linecap="round" /><path d="M42.4,299.5 L45.5,297.0 L51.5,298.2 L51.6,303.0 L48.3,305.0 L43.0,303.8Z" stroke="#161616" stroke-width="1.30" fill="#fff" stroke-linejoin="round" stroke-linecap="round" /><path d="M45.4,297.2 L45.8,301.6 L43,303.6 M45.8,301.6 L51.5,302.8" stroke="#161616" stroke-width="0.91" fill="none" stroke-linejoin="round" stroke-linecap="round" /><path d="M53,308 L53,287.6 Q53.2,283.6 57.4,283.4 Q62.4,283.6 62.6,288 L63.9,312.4 L68.8,308.7 L75.7,310.7 L77.7,321.5 L73.7,327.4 L64.9,326.4 L59,321.5 L48.2,315.6 L46.2,306.8 L51,305.5 Z" stroke="#161616" stroke-width="1.30" fill="#fff" stroke-linejoin="round" stroke-linecap="round" /><ellipse cx="57.2" cy="289.6" rx="0.9" ry="1.3" transform="rotate(-20 57.2 289.6)" stroke="#161616" stroke-width="1.04" fill="#fff"/><ellipse cx="55.4" cy="310.2" rx="0.5" ry="0.5" transform="rotate(0 55.4 310.2)" stroke="#161616" stroke-width="0.78" fill="#fff"/><ellipse cx="58.0" cy="309.0" rx="0.5" ry="0.5" transform="rotate(0 58.0 309.0)" stroke="#161616" stroke-width="0.78" fill="#fff"/><ellipse cx="56.8" cy="312.2" rx="0.5" ry="0.5" transform="rotate(0 56.8 312.2)" stroke="#161616" stroke-width="0.78" fill="#fff"/><ellipse cx="58.0" cy="319.5" rx="2.4" ry="2.9" transform="rotate(-25 58.0 319.5)" stroke="#161616" stroke-width="1.43" fill="#fff"/><ellipse cx="58.0" cy="319.5" rx="1.0" ry="1.3" transform="rotate(-25 58.0 319.5)" stroke="#161616" stroke-width="0.91" fill="#fff"/><ellipse cx="73.6" cy="316.6" rx="3.4" ry="4.0" transform="rotate(-25 73.6 316.6)" stroke="#161616" stroke-width="1.56" fill="#fff"/><ellipse cx="73.6" cy="316.6" rx="1.6" ry="2.0" transform="rotate(-25 73.6 316.6)" stroke="#161616" stroke-width="0.91" fill="#fff"/><path d="M68.8,308.7 L66.5,316 M69.5,322.5 L73.7,327.4" stroke="#161616" stroke-width="0.91" fill="none" stroke-linejoin="round" stroke-linecap="round" /><path d="M86.1,293.4 L74.7,311.4 L78.5,313.8 L89.9,295.8Z" stroke="#161616" stroke-width="1.04" fill="#fff" stroke-linejoin="round" stroke-linecap="round" /><path d="M85.0,295.1 L88.5,298.1 M83.7,297.1 L87.2,300.1 M82.4,299.1 L86.0,302.1 M81.2,301.1 L84.7,304.1 M79.9,303.1 L83.4,306.1 M78.6,305.1 L82.2,308.1 M77.4,307.1 L80.9,310.1 M76.1,309.1 L79.6,312.1" stroke="#161616" stroke-width="1.04" fill="none" stroke-linejoin="round" stroke-linecap="round" /><ellipse cx="90.8" cy="290.3" rx="4.2" ry="4.2" transform="rotate(0 90.8 290.3)" stroke="#161616" stroke-width="1.30" fill="#fff"/><ellipse cx="92.4" cy="301.0" rx="2.8" ry="3.7" transform="rotate(-25 92.4 301.0)" stroke="#161616" stroke-width="1.69" fill="#fff"/><ellipse cx="92.4" cy="301.0" rx="1.1" ry="1.6" transform="rotate(-25 92.4 301.0)" stroke="#161616" stroke-width="0.91" fill="#fff"/><ellipse cx="97.2" cy="298.8" rx="2.3" ry="3.1" transform="rotate(-25 97.2 298.8)" stroke="#161616" stroke-width="1.17" fill="#fff"/><path d="M98.4,277.6 Q98.3,275.4 100.4,274.6 L108.6,272.6 L105.5,275.9 L111.7,301.1 L103.4,304.9 L101.6,303.6 L103.6,301.4 Z" stroke="#161616" stroke-width="1.30" fill="#fff" stroke-linejoin="round" stroke-linecap="round" /><path d="M105.5,275.9 L100.6,277.4 M103.6,301.4 L110.4,298.4 M101.8,291.5 Q103.6,290.2 104.4,292.8" stroke="#161616" stroke-width="0.91" fill="none" stroke-linejoin="round" stroke-linecap="round" /><ellipse cx="113.2" cy="289.2" rx="3.0" ry="4.4" transform="rotate(-25 113.2 289.2)" stroke="#161616" stroke-width="1.95" fill="#fff"/><ellipse cx="113.4" cy="289.2" rx="1.1" ry="1.9" transform="rotate(-25 113.4 289.2)" stroke="#161616" stroke-width="0.91" fill="#fff"/><ellipse cx="118.7" cy="285.8" rx="1.7" ry="2.7" transform="rotate(-25 118.7 285.8)" stroke="#161616" stroke-width="1.17" fill="#fff"/><ellipse cx="124.0" cy="281.5" rx="3.4" ry="4.8" transform="rotate(-25 124.0 281.5)" stroke="#161616" stroke-width="2.08" fill="#fff"/><ellipse cx="124.2" cy="281.5" rx="1.4" ry="2.4" transform="rotate(-25 124.2 281.5)" stroke="#161616" stroke-width="1.04" fill="#fff"/><path d="M125.4,276.6 L135.6,270.6 L140.3,277.6 L128.6,284.4Z" stroke="#161616" stroke-width="1.30" fill="#fff" stroke-linejoin="round" stroke-linecap="round" /><ellipse cx="137.9" cy="274.2" rx="2.7" ry="4.6" transform="rotate(-28 137.9 274.2)" stroke="#161616" stroke-width="1.30" fill="#fff"/><path d="M128.8,279 Q130.5,278 130.6,280.6 M131.5,282.7 L139,278.4" stroke="#161616" stroke-width="0.91" fill="none" stroke-linejoin="round" stroke-linecap="round" /><path d="M57,321.5 L43.3,329 L74.7,349 L69.8,353" stroke="#161616" stroke-width="1.04" fill="none" stroke-linejoin="round" stroke-linecap="round" stroke-dasharray="6 2 1.5 2"/><path d="M45.6,349.2 L63.9,359.0" stroke="#202020" stroke-width="0.95" fill="none"/><text class="lb" x="36.3" y="349.5" text-anchor="middle" font-size="8.2" font-weight="normal" fill="#2b2b2b">31</text><text class="lb" x="44.2" y="364.9" text-anchor="middle" font-size="8.2" font-weight="normal" fill="#2b2b2b">32</text><path d="M46.6,367.4 L46.6,379.2 L50.1,377.3 M45.6,380.6 L66.9,396 L70.8,394" stroke="#161616" stroke-width="1.04" fill="none" stroke-linejoin="round" stroke-linecap="round" /><path d="M38.3,381.2 L41.3,391.0" stroke="#202020" stroke-width="0.95" fill="none"/><text class="lb" x="35.4" y="377.9" text-anchor="middle" font-size="8.2" font-weight="normal" fill="#2b2b2b">33</text><path d="M24.6,389.1 L24.6,399.9" stroke="#202020" stroke-width="0.95" fill="none"/><text class="lb" x="22.6" y="385.8" text-anchor="middle" font-size="8.2" font-weight="normal" fill="#2b2b2b">34</text><rect x="63.9" y="352.6" width="10.4" height="31.6" rx="5.2" transform="rotate(-3 69 368)" fill="#fff" stroke="#161616" stroke-width="1.1"/><ellipse cx="67.9" cy="357.8" rx="0.9" ry="1.4" transform="rotate(-20 67.9 357.8)" stroke="#161616" stroke-width="1.04" fill="#fff"/><ellipse cx="68.9" cy="377.9" rx="0.9" ry="1.4" transform="rotate(-20 68.9 377.9)" stroke="#161616" stroke-width="1.04" fill="#fff"/><ellipse cx="58.0" cy="387.2" rx="2.3" ry="2.9" transform="rotate(-25 58.0 387.2)" stroke="#161616" stroke-width="1.56" fill="#fff"/><ellipse cx="58.0" cy="387.2" rx="0.9" ry="1.2" transform="rotate(-25 58.0 387.2)" stroke="#161616" stroke-width="0.91" fill="#fff"/><path d="M29.6,408.4 L36.2,405.5 L33.0,397.9 L26.4,400.8Z" stroke="#161616" stroke-width="1.17" fill="#fff" stroke-linejoin="round" stroke-linecap="round" /><path d="M30.7,407.9 L28.6,399.9 M32.4,407.2 L30.2,399.1 M34.0,406.4 L31.9,398.4" stroke="#161616" stroke-width="1.04" fill="none" stroke-linejoin="round" stroke-linecap="round" /><ellipse cx="27.6" cy="404.8" rx="3.6" ry="5.6" transform="rotate(-25 27.6 404.8)" stroke="#161616" stroke-width="1.30" fill="#fff"/><path d="M17.6,404.4 L20.6,400.4 L26.0,400.2 L29.4,404.2 L28.6,409.4 L24.6,411.8 L19.4,410.6Z" stroke="#161616" stroke-width="1.43" fill="#fff" stroke-linejoin="round" stroke-linecap="round" /><ellipse cx="22.6" cy="405.8" rx="3.6" ry="5.0" transform="rotate(-20 22.6 405.8)" stroke="#161616" stroke-width="1.17" fill="none"/><path d="M46.4,396.1 L52.8,393.2 L50.8,388.6 L44.4,391.5Z" stroke="#161616" stroke-width="1.17" fill="#fff" stroke-linejoin="round" stroke-linecap="round" /><ellipse cx="52.0" cy="390.8" rx="1.7" ry="2.6" transform="rotate(-25 52.0 390.8)" stroke="#161616" stroke-width="1.04" fill="#fff"/><path d="M42.4,400.5 L48.2,397.8 L44.2,389.0 L38.4,391.7Z" stroke="#161616" stroke-width="1.17" fill="#fff" stroke-linejoin="round" stroke-linecap="round" /><ellipse cx="40.3" cy="396.2" rx="3.6" ry="5.2" transform="rotate(-25 40.3 396.2)" stroke="#161616" stroke-width="1.56" fill="#fff"/><ellipse cx="40.4" cy="396.2" rx="1.5" ry="2.2" transform="rotate(-25 40.4 396.2)" stroke="#161616" stroke-width="1.17" fill="#777"/><path d="M64.9,420.5 L70.8,431.3" stroke="#202020" stroke-width="0.95" fill="none"/><text class="lb" x="62.9" y="416.3" text-anchor="middle" font-size="8.2" font-weight="normal" fill="#2b2b2b">59</text><path d="M85.5,434.3 L88.1,445.1" stroke="#202020" stroke-width="0.95" fill="none"/><text class="lb" x="89.5" y="455.6" text-anchor="middle" font-size="8.2" font-weight="normal" fill="#2b2b2b">58</text><path d="M94.4,426.4 L103.2,436.3" stroke="#202020" stroke-width="0.95" fill="none"/><text class="lb" x="108.5" y="449.1" text-anchor="middle" font-size="8.2" font-weight="normal" fill="#2b2b2b">57</text><path d="M116.0,417.6 L123.9,425.4" stroke="#202020" stroke-width="0.95" fill="none"/><text class="lb" x="128.2" y="436.9" text-anchor="middle" font-size="8.2" font-weight="normal" fill="#2b2b2b">56</text><path d="M120.9,391.0 L125.8,402.8" stroke="#202020" stroke-width="0.95" fill="none"/><text class="lb" x="119.0" y="387.2" text-anchor="middle" font-size="8.2" font-weight="normal" fill="#2b2b2b">55</text><path d="M140.7,404.3 L146.6,413.1" stroke="#202020" stroke-width="0.95" fill="none"/><text class="lb" x="152.5" y="422.0" text-anchor="middle" font-size="8.2" font-weight="normal" fill="#2b2b2b">54</text><path d="M142.6,376.7 L147.5,389.5" stroke="#202020" stroke-width="0.95" fill="none"/><text class="lb" x="140.7" y="371.9" text-anchor="middle" font-size="8.2" font-weight="normal" fill="#2b2b2b">53</text><path d="M158.4,371.8 L162.3,382.6" stroke="#202020" stroke-width="0.95" fill="none"/><text class="lb" x="157.0" y="366.9" text-anchor="middle" font-size="8.2" font-weight="normal" fill="#2b2b2b">52</text><path d="M177.0,378.7 L180.6,388.1" stroke="#202020" stroke-width="0.95" fill="none"/><text class="lb" x="181.0" y="400.8" text-anchor="middle" font-size="8.2" font-weight="normal" fill="#2b2b2b">51</text><path d="M66.4,434.2 L69.2,429.8 L74.6,429.4 L78.8,433.4 L78.6,439.6 L75.2,443.2 L69.6,442.8 L66.6,439.2Z" stroke="#161616" stroke-width="1.69" fill="#fff" stroke-linejoin="round" stroke-linecap="round" /><ellipse cx="72.8" cy="436.6" rx="3.8" ry="4.6" transform="rotate(-20 72.8 436.6)" stroke="#161616" stroke-width="1.43" fill="#fff"/><ellipse cx="72.9" cy="436.7" rx="1.7" ry="2.2" transform="rotate(-20 72.9 436.7)" stroke="#161616" stroke-width="1.43" fill="#555"/><ellipse cx="82.6" cy="429.5" rx="2.6" ry="4.7" transform="rotate(-25 82.6 429.5)" stroke="#161616" stroke-width="1.17" fill="#fff"/><ellipse cx="88.2" cy="424.6" rx="0.71" ry="2.70" transform="rotate(-10.2 88.2 424.6)" stroke="#161616" stroke-width="1.1" fill="#fff"/><ellipse cx="89.7" cy="423.9" rx="0.71" ry="2.70" transform="rotate(-10.2 89.7 423.9)" stroke="#161616" stroke-width="1.1" fill="#fff"/><ellipse cx="91.2" cy="423.1" rx="0.71" ry="2.70" transform="rotate(-10.2 91.2 423.1)" stroke="#161616" stroke-width="1.1" fill="#fff"/><ellipse cx="92.7" cy="422.4" rx="0.71" ry="2.70" transform="rotate(-10.2 92.7 422.4)" stroke="#161616" stroke-width="1.1" fill="#fff"/><ellipse cx="94.3" cy="421.6" rx="0.71" ry="2.70" transform="rotate(-10.2 94.3 421.6)" stroke="#161616" stroke-width="1.1" fill="#fff"/><ellipse cx="95.8" cy="420.9" rx="0.71" ry="2.70" transform="rotate(-10.2 95.8 420.9)" stroke="#161616" stroke-width="1.1" fill="#fff"/><ellipse cx="97.3" cy="420.1" rx="0.71" ry="2.70" transform="rotate(-10.2 97.3 420.1)" stroke="#161616" stroke-width="1.1" fill="#fff"/><ellipse cx="98.8" cy="419.4" rx="0.71" ry="2.70" transform="rotate(-10.2 98.8 419.4)" stroke="#161616" stroke-width="1.1" fill="#fff"/><path d="M113.5,416.3 L121.9,412.0 L118.9,406.4 L110.5,410.7Z" stroke="#161616" stroke-width="1.04" fill="#fff" stroke-linejoin="round" stroke-linecap="round" /><path d="M114.7,415.7 L112.6,409.6 M116.4,414.8 L114.3,408.7 M118.1,414.0 L116.0,407.9 M119.8,413.1 L117.7,407.0" stroke="#161616" stroke-width="1.04" fill="none" stroke-linejoin="round" stroke-linecap="round" /><path d="M103.2,412.6 L107.6,409.6 L113.4,411.4 L114.6,417.6 L110.4,421.4 L104.2,419.4Z" stroke="#161616" stroke-width="1.43" fill="#fff" stroke-linejoin="round" stroke-linecap="round" /><ellipse cx="108.7" cy="415.6" rx="4.4" ry="5.4" transform="rotate(-25 108.7 415.6)" stroke="#161616" stroke-width="1.17" fill="none"/><ellipse cx="106.6" cy="416.6" rx="0.8" ry="1.0" transform="rotate(0 106.6 416.6)" stroke="#161616" stroke-width="0.91" fill="#fff"/><ellipse cx="127.2" cy="406.3" rx="2.5" ry="4.7" transform="rotate(-25 127.2 406.3)" stroke="#161616" stroke-width="1.17" fill="#fff"/><ellipse cx="138.7" cy="399.5" rx="2.5" ry="4.7" transform="rotate(-25 138.7 399.5)" stroke="#161616" stroke-width="1.17" fill="#fff"/><path d="M144.7,397.6 L155.3,391.9 L152.7,387.1 L142.1,392.8Z" stroke="#161616" stroke-width="1.17" fill="#fff" stroke-linejoin="round" stroke-linecap="round" /><ellipse cx="143.2" cy="395.3" rx="1.9" ry="2.9" transform="rotate(-25 143.2 395.3)" stroke="#161616" stroke-width="1.17" fill="#fff"/><path d="M153.6,387 Q156.6,388 155.2,391.8" stroke="#161616" stroke-width="1.17" fill="none" stroke-linejoin="round" stroke-linecap="round" /><ellipse cx="157.8" cy="386.6" rx="0.70" ry="1.90" transform="rotate(-13.1 157.8 386.6)" stroke="#161616" stroke-width="1.0" fill="#fff"/><ellipse cx="159.1" cy="385.9" rx="0.70" ry="1.90" transform="rotate(-13.1 159.1 385.9)" stroke="#161616" stroke-width="1.0" fill="#fff"/><ellipse cx="160.4" cy="385.2" rx="0.70" ry="1.90" transform="rotate(-13.1 160.4 385.2)" stroke="#161616" stroke-width="1.0" fill="#fff"/><ellipse cx="161.8" cy="384.5" rx="0.70" ry="1.90" transform="rotate(-13.1 161.8 384.5)" stroke="#161616" stroke-width="1.0" fill="#fff"/><ellipse cx="163.0" cy="383.7" rx="0.70" ry="1.90" transform="rotate(-13.1 163.0 383.7)" stroke="#161616" stroke-width="1.0" fill="#fff"/><ellipse cx="164.3" cy="383.0" rx="0.70" ry="1.90" transform="rotate(-13.1 164.3 383.0)" stroke="#161616" stroke-width="1.0" fill="#fff"/><ellipse cx="165.7" cy="382.3" rx="0.70" ry="1.90" transform="rotate(-13.1 165.7 382.3)" stroke="#161616" stroke-width="1.0" fill="#fff"/><ellipse cx="166.9" cy="381.6" rx="0.70" ry="1.90" transform="rotate(-13.1 166.9 381.6)" stroke="#161616" stroke-width="1.0" fill="#fff"/><ellipse cx="170.5" cy="379.2" rx="0.70" ry="1.90" transform="rotate(-13.5 170.5 379.2)" stroke="#161616" stroke-width="1.0" fill="#fff"/><ellipse cx="171.8" cy="378.5" rx="0.70" ry="1.90" transform="rotate(-13.5 171.8 378.5)" stroke="#161616" stroke-width="1.0" fill="#fff"/><ellipse cx="173.1" cy="377.7" rx="0.70" ry="1.90" transform="rotate(-13.5 173.1 377.7)" stroke="#161616" stroke-width="1.0" fill="#fff"/><ellipse cx="174.4" cy="377.0" rx="0.70" ry="1.90" transform="rotate(-13.5 174.4 377.0)" stroke="#161616" stroke-width="1.0" fill="#fff"/><ellipse cx="175.8" cy="376.2" rx="0.70" ry="1.90" transform="rotate(-13.5 175.8 376.2)" stroke="#161616" stroke-width="1.0" fill="#fff"/><ellipse cx="177.1" cy="375.5" rx="0.70" ry="1.90" transform="rotate(-13.5 177.1 375.5)" stroke="#161616" stroke-width="1.0" fill="#fff"/><ellipse cx="178.4" cy="374.7" rx="0.70" ry="1.90" transform="rotate(-13.5 178.4 374.7)" stroke="#161616" stroke-width="1.0" fill="#fff"/><ellipse cx="179.7" cy="374.0" rx="0.70" ry="1.90" transform="rotate(-13.5 179.7 374.0)" stroke="#161616" stroke-width="1.0" fill="#fff"/><path d="M188.5,347.2 L188.5,363.0" stroke="#202020" stroke-width="0.95" fill="none"/><text class="lb" x="189.8" y="342.3" text-anchor="middle" font-size="8.2" font-weight="normal" fill="#2b2b2b">50</text><path d="M206.6,365.9 L213.4,375.7" stroke="#202020" stroke-width="0.95" fill="none"/><text class="lb" x="214.0" y="384.8" text-anchor="middle" font-size="8.2" font-weight="normal" fill="#2b2b2b">49</text><path d="M215.4,360.0 L226.2,373.8" stroke="#202020" stroke-width="0.95" fill="none"/><text class="lb" x="230.6" y="385.3" text-anchor="middle" font-size="8.2" font-weight="normal" fill="#2b2b2b">49</text><path d="M228.2,354.1 L243.0,371.8" stroke="#202020" stroke-width="0.95" fill="none"/><text class="lb" x="246.5" y="381.7" text-anchor="middle" font-size="8.2" font-weight="normal" fill="#2b2b2b">48</text><path d="M238.0,346.2 L246.9,357.0" stroke="#202020" stroke-width="0.95" fill="none"/><text class="lb" x="249.8" y="367.5" text-anchor="middle" font-size="8.2" font-weight="normal" fill="#2b2b2b">47</text><path d="M248.9,343.3 L255.7,350.8" stroke="#202020" stroke-width="0.95" fill="none"/><text class="lb" x="262.0" y="358.5" text-anchor="middle" font-size="8.2" font-weight="normal" fill="#2b2b2b">46</text><path d="M265.6,336.4 L272.5,342.3" stroke="#202020" stroke-width="0.95" fill="none"/><text class="lb" x="276.4" y="351.8" text-anchor="middle" font-size="8.2" font-weight="normal" fill="#2b2b2b">45</text><path d="M192.2,373.8 L196.2,371.6 L191.0,362.4 L187.0,364.6Z" stroke="#161616" stroke-width="1.17" fill="#fff" stroke-linejoin="round" stroke-linecap="round" /><ellipse cx="194.0" cy="366.8" rx="3.6" ry="5.6" transform="rotate(-25 194.0 366.8)" stroke="#161616" stroke-width="1.17" fill="#fff"/><ellipse cx="192.2" cy="367.8" rx="3.6" ry="5.6" transform="rotate(-25 192.2 367.8)" stroke="#161616" stroke-width="1.04" fill="none"/><ellipse cx="189.4" cy="369.4" rx="3.9" ry="5.6" transform="rotate(-25 189.4 369.4)" stroke="#161616" stroke-width="1.30" fill="#fff"/><ellipse cx="204.6" cy="360.7" rx="3.1" ry="4.1" transform="rotate(-25 204.6 360.7)" stroke="#161616" stroke-width="1.82" fill="#fff"/><ellipse cx="204.8" cy="360.7" rx="1.1" ry="1.7" transform="rotate(-25 204.8 360.7)" stroke="#161616" stroke-width="0.91" fill="#fff"/><ellipse cx="212.6" cy="355.7" rx="3.1" ry="4.1" transform="rotate(-25 212.6 355.7)" stroke="#161616" stroke-width="1.82" fill="#fff"/><ellipse cx="212.8" cy="355.7" rx="1.1" ry="1.7" transform="rotate(-25 212.8 355.7)" stroke="#161616" stroke-width="0.91" fill="#fff"/><path d="M225.8,355.1 L229.8,353.0 L225.0,344.0 L221.0,346.1Z" stroke="#161616" stroke-width="1.17" fill="#fff" stroke-linejoin="round" stroke-linecap="round" /><ellipse cx="227.6" cy="348.4" rx="3.5" ry="5.3" transform="rotate(-25 227.6 348.4)" stroke="#161616" stroke-width="1.17" fill="#fff"/><ellipse cx="225.8" cy="349.4" rx="3.5" ry="5.3" transform="rotate(-25 225.8 349.4)" stroke="#161616" stroke-width="1.04" fill="none"/><ellipse cx="223.2" cy="350.8" rx="3.7" ry="5.4" transform="rotate(-25 223.2 350.8)" stroke="#161616" stroke-width="1.30" fill="#fff"/><ellipse cx="236.2" cy="342.9" rx="2.3" ry="4.4" transform="rotate(-25 236.2 342.9)" stroke="#161616" stroke-width="1.17" fill="#fff"/><ellipse cx="244.9" cy="339.3" rx="4.5" ry="6.8" transform="rotate(-25 244.9 339.3)" stroke="#161616" stroke-width="1.43" fill="#fff"/><ellipse cx="245.2" cy="339.3" rx="3.0" ry="5.0" transform="rotate(-25 245.2 339.3)" stroke="#161616" stroke-width="1.17" fill="#fff"/><path d="M258.6,326.6 L265.2,321.8 L270.6,324.4 L271.6,332.4 L265.6,337.6 L260.4,335.6Z" stroke="#161616" stroke-width="1.43" fill="#fff" stroke-linejoin="round" stroke-linecap="round" /><path d="M265.2,321.8 L265.8,329.6 L271.6,332.4 M265.8,329.6 L260.4,335.6" stroke="#161616" stroke-width="0.91" fill="none" stroke-linejoin="round" stroke-linecap="round" /><path d="M254.3,337.7 L261.3,334.1 L257.9,327.5 L250.9,331.1Z" stroke="#161616" stroke-width="1.17" fill="#fff" stroke-linejoin="round" stroke-linecap="round" /><path d="M255.2,337.2 L252.8,330.1 M256.6,336.5 L254.2,329.4 M258.0,335.8 L255.6,328.7 M259.4,335.1 L257.0,328.0" stroke="#161616" stroke-width="1.04" fill="none" stroke-linejoin="round" stroke-linecap="round" /><ellipse cx="252.6" cy="334.4" rx="2.6" ry="3.7" transform="rotate(-25 252.6 334.4)" stroke="#161616" stroke-width="1.17" fill="#fff"/><rect x="230.1" y="415" width="11.9" height="10" fill="#ff8080"/><text class="lb" x="236" y="423.4" text-anchor="middle" font-size="8.4" fill="#2a0505" stroke="#2a0505" stroke-width="0.45" textLength="8.6" lengthAdjust="spacingAndGlyphs">60</text><path d="M247.0,421.4 L258.4,422.1" stroke="#202020" stroke-width="0.95" fill="none"/><rect x="259.30" y="412.80" width="45.10" height="18.20" fill="#fff" stroke="#1a1a1a" stroke-width="1"/><text class="lb" x="265.7" y="423.8" font-size="5.4" font-weight="bold" fill="#111" stroke="#111" stroke-width="0.2" textLength="30.4" lengthAdjust="spacingAndGlyphs">GASKET KIT</text><text class="lb" x="227.1" y="453.6" text-anchor="middle" font-size="8.2" font-weight="normal" fill="#2b2b2b">61</text><path d="M236.3,451.1 L244.7,450.4" stroke="#202020" stroke-width="0.95" fill="none"/><rect x="245.80" y="441.30" width="58.60" height="18.20" fill="#fff" stroke="#1a1a1a" stroke-width="1"/><text class="lb" x="247.1" y="447.8" font-size="5.4" font-weight="bold" fill="#111" stroke="#111" stroke-width="0.2" textLength="54.0" lengthAdjust="spacingAndGlyphs">ESO MOUNTING AND</text><text class="lb" x="253.1" y="455.5" font-size="5.4" font-weight="bold" fill="#111" stroke="#111" stroke-width="0.2" textLength="42.0" lengthAdjust="spacingAndGlyphs">GROUNDING KIT</text><text class="lb" x="197.4" y="488.6" text-anchor="middle" font-size="8.2" font-weight="normal" fill="#2b2b2b">62</text><path d="M205.4,485.6 L216.8,485.6" stroke="#202020" stroke-width="0.95" fill="none"/><rect x="217.70" y="476.00" width="86.70" height="18.20" fill="#fff" stroke="#1a1a1a" stroke-width="1"/><text class="lb" x="225.6" y="483.4" font-size="5.4" font-weight="bold" fill="#111" stroke="#111" stroke-width="0.2" textLength="69.0" lengthAdjust="spacingAndGlyphs">THROTTLE SHAFT BUSHING</text><text class="lb" x="236.1" y="490.0" font-size="5.4" font-weight="bold" fill="#111" stroke="#111" stroke-width="0.2" textLength="48.0" lengthAdjust="spacingAndGlyphs">REPLACEMENT KIT</text><text class="lb" x="236.3" y="523.8" text-anchor="middle" font-size="8.2" font-weight="normal" fill="#2b2b2b">63</text><path d="M245.4,521.7 L257.7,521.9" stroke="#202020" stroke-width="0.95" fill="none"/><rect x="258.60" y="510.90" width="45.80" height="22.30" fill="#fff" stroke="#1a1a1a" stroke-width="1"/><text class="lb" x="265.9" y="518.1" font-size="5.4" font-weight="bold" fill="#111" stroke="#111" stroke-width="0.2" textLength="29.2" lengthAdjust="spacingAndGlyphs">PILOT TUBE</text><text class="lb" x="262.1" y="524.6" font-size="5.4" font-weight="bold" fill="#111" stroke="#111" stroke-width="0.2" textLength="36.8" lengthAdjust="spacingAndGlyphs">REPLACEMENT</text><text class="lb" x="276.6" y="531.0" font-size="5.4" font-weight="bold" fill="#111" stroke="#111" stroke-width="0.2" textLength="7.8" lengthAdjust="spacingAndGlyphs">KIT</text><path d="M41.9,475.8 L50.5,481.0" stroke="#202020" stroke-width="0.95" fill="none"/><text class="lb" x="32.4" y="473.3" text-anchor="middle" font-size="8.2" font-weight="normal" fill="#2b2b2b">44</text><path d="M94.0,471.0 L76.3,476.2" stroke="#202020" stroke-width="0.95" fill="none"/><text class="lb" x="103.3" y="472.5" text-anchor="middle" font-size="8.2" font-weight="normal" fill="#2b2b2b">41</text><path d="M96.6,484.1 L78.9,486.5" stroke="#202020" stroke-width="0.95" fill="none"/><text class="lb" x="105.2" y="487.4" text-anchor="middle" font-size="8.2" font-weight="normal" fill="#2b2b2b">42</text><path d="M121.6,510.6 L111.3,516.8" stroke="#202020" stroke-width="0.95" fill="none"/><text class="lb" x="128.8" y="507.2" text-anchor="middle" font-size="8.2" font-weight="normal" fill="#2b2b2b">40</text><path d="M43.6,531.8 L55.6,527.5" stroke="#202020" stroke-width="0.95" fill="none"/><text class="lb" x="33.6" y="538.2" text-anchor="middle" font-size="8.2" font-weight="normal" fill="#2b2b2b">43</text><path d="M71.3,473.5 L71.3,480.4 L75.1,480.4 L75.1,473.5Z" stroke="#161616" stroke-width="1.04" fill="#fff" stroke-linejoin="round" stroke-linecap="round" /><path d="M71.4,476 L75,476 M71.4,478 L75,478" stroke="#161616" stroke-width="0.78" fill="none" stroke-linejoin="round" stroke-linecap="round" /><ellipse cx="73.0" cy="470.2" rx="4.8" ry="3.8" transform="rotate(0 73.0 470.2)" stroke="#161616" stroke-width="1.43" fill="#fff"/><path d="M68.4,471.2 Q73,476.4 77.8,471.2" stroke="#161616" stroke-width="1.04" fill="none" stroke-linejoin="round" stroke-linecap="round" /><ellipse cx="73.7" cy="485.9" rx="4.8" ry="2.7" transform="rotate(0 73.7 485.9)" stroke="#161616" stroke-width="1.69" fill="#fff"/><ellipse cx="73.7" cy="485.7" rx="2.2" ry="1.1" transform="rotate(0 73.7 485.7)" stroke="#161616" stroke-width="0.91" fill="#fff"/><path d="M58.9,483.2 L80.6,496.2 L80.2,499.6 L76.3,501.4 L53.0,490.2 L51.3,487.0Z" stroke="#161616" stroke-width="1.30" fill="#fff" stroke-linejoin="round" stroke-linecap="round" /><path d="M51.3,487 L51.3,479.2 Q55,475.4 59,478.6 L59,486" stroke="#161616" stroke-width="1.30" fill="#fff" stroke-linejoin="round" stroke-linecap="round" /><ellipse cx="55.1" cy="478.9" rx="3.8" ry="2.2" transform="rotate(0 55.1 478.9)" stroke="#161616" stroke-width="1.17" fill="#fff"/><ellipse cx="74.0" cy="496.6" rx="1.0" ry="0.7" transform="rotate(0 74.0 496.6)" stroke="#161616" stroke-width="0.91" fill="#fff"/><path d="M69.4,502.4 L78.9,503.0 L81.5,510.3 L94.4,517.2 L99.5,512.9 L105.6,516.3 L105.6,521.5 L94.4,526.6 L75.4,514.6Z" stroke="#161616" stroke-width="1.30" fill="#fff" stroke-linejoin="round" stroke-linecap="round" /><path d="M94.4,517.2 L94.4,520 M105.6,521.5 L94.8,524" stroke="#161616" stroke-width="0.91" fill="none" stroke-linejoin="round" stroke-linecap="round" /><ellipse cx="74.4" cy="505.2" rx="1.0" ry="0.7" transform="rotate(0 74.4 505.2)" stroke="#161616" stroke-width="0.91" fill="#fff"/><path d="M107.2,512 L107.6,531 Q109.4,537.6 113.6,533.6 Q116.4,531 117,527.6 M109.6,512.4 L110,529.4 Q111,532.6 113.4,530 Q115,528.6 115.4,526.6" stroke="#161616" stroke-width="1.30" fill="none" stroke-linejoin="round" stroke-linecap="round" /><path d="M107.2,512 Q108.4,511 109.6,512.4 M117,527.6 L115.4,526.6" stroke="#161616" stroke-width="1.17" fill="none" stroke-linejoin="round" stroke-linecap="round" /><ellipse cx="56.3" cy="523.5" rx="0.87" ry="2.10" transform="rotate(45.7 56.3 523.5)" stroke="#161616" stroke-width="1.0" fill="#fff"/><ellipse cx="58.1" cy="524.5" rx="0.87" ry="2.10" transform="rotate(45.7 58.1 524.5)" stroke="#161616" stroke-width="1.0" fill="#fff"/><ellipse cx="59.9" cy="525.6" rx="0.87" ry="2.10" transform="rotate(45.7 59.9 525.6)" stroke="#161616" stroke-width="1.0" fill="#fff"/><ellipse cx="61.7" cy="526.6" rx="0.87" ry="2.10" transform="rotate(45.7 61.7 526.6)" stroke="#161616" stroke-width="1.0" fill="#fff"/><ellipse cx="63.5" cy="527.6" rx="0.87" ry="2.10" transform="rotate(45.7 63.5 527.6)" stroke="#161616" stroke-width="1.0" fill="#fff"/><ellipse cx="65.3" cy="528.7" rx="0.87" ry="2.10" transform="rotate(45.7 65.3 528.7)" stroke="#161616" stroke-width="1.0" fill="#fff"/><ellipse cx="67.1" cy="529.7" rx="0.87" ry="2.10" transform="rotate(45.7 67.1 529.7)" stroke="#161616" stroke-width="1.0" fill="#fff"/><ellipse cx="68.9" cy="530.7" rx="0.87" ry="2.10" transform="rotate(45.7 68.9 530.7)" stroke="#161616" stroke-width="1.0" fill="#fff"/><ellipse cx="70.7" cy="531.7" rx="0.87" ry="2.10" transform="rotate(45.7 70.7 531.7)" stroke="#161616" stroke-width="1.0" fill="#fff"/><ellipse cx="72.5" cy="532.8" rx="0.87" ry="2.10" transform="rotate(45.7 72.5 532.8)" stroke="#161616" stroke-width="1.0" fill="#fff"/><ellipse cx="74.3" cy="533.8" rx="0.87" ry="2.10" transform="rotate(45.7 74.3 533.8)" stroke="#161616" stroke-width="1.0" fill="#fff"/><ellipse cx="76.1" cy="534.8" rx="0.87" ry="2.10" transform="rotate(45.7 76.1 534.8)" stroke="#161616" stroke-width="1.0" fill="#fff"/><ellipse cx="77.9" cy="535.9" rx="0.87" ry="2.10" transform="rotate(45.7 77.9 535.9)" stroke="#161616" stroke-width="1.0" fill="#fff"/><ellipse cx="79.7" cy="536.9" rx="0.87" ry="2.10" transform="rotate(45.7 79.7 536.9)" stroke="#161616" stroke-width="1.0" fill="#fff"/><path d="M55.4,523 L52.8,520.8 M80.6,537.4 L84,539.6" stroke="#161616" stroke-width="1.69" fill="none" stroke-linejoin="round" stroke-linecap="round" /><ellipse cx="83.6" cy="539.4" rx="1.1" ry="1.1" transform="rotate(0 83.6 539.4)" stroke="#161616" stroke-width="1.04" fill="#fff"/></g>
<g fill="none" stroke="#1b5ba5"><circle cx="1039.0" cy="570.1" r="6.85" stroke-width="2.8"/><path d="M1033.6,575.5 L1044.4,564.7" stroke-width="2.4"/><circle cx="1055.4" cy="570.1" r="6.85" stroke-width="2.8"/><path d="M1050.0,564.7 L1060.8000000000002,575.5" stroke-width="2.4"/><circle cx="1039.0" cy="586.5" r="6.85" stroke-width="2.8"/><path d="M1033.6,581.1 L1044.4,591.9" stroke-width="2.4"/><circle cx="1055.4" cy="586.5" r="6.85" stroke-width="2.8"/><path d="M1050.0,591.9 L1060.8000000000002,581.1" stroke-width="2.4"/></g><path d="M1047.2,561.2 L1049.4,565.2 L1045.0,565.2Z M1047.2,595.4 L1049.4,591.4 L1045.0,591.4Z M1029.9,578.3 L1033.9,576.1 L1033.9,580.5Z M1064.5,578.3 L1060.5,576.1 L1060.5,580.5Z" fill="#1b5ba5"/><path d="M1047.2,563.5 L1047.2,566.4 M1047.2,590.2 L1047.2,593.1" stroke="#fff" stroke-width="0.5" opacity="0.8"/><text x="1030.4" y="606.1" font-family="Liberation Sans, sans-serif" font-weight="bold" font-size="9.7" fill="#1b5ba5" letter-spacing="-0.1">Perkins</text><circle cx="1066.6" cy="601.6" r="0.55" fill="#1b5ba5" opacity="0.8"/>
</svg>
</body></html>
